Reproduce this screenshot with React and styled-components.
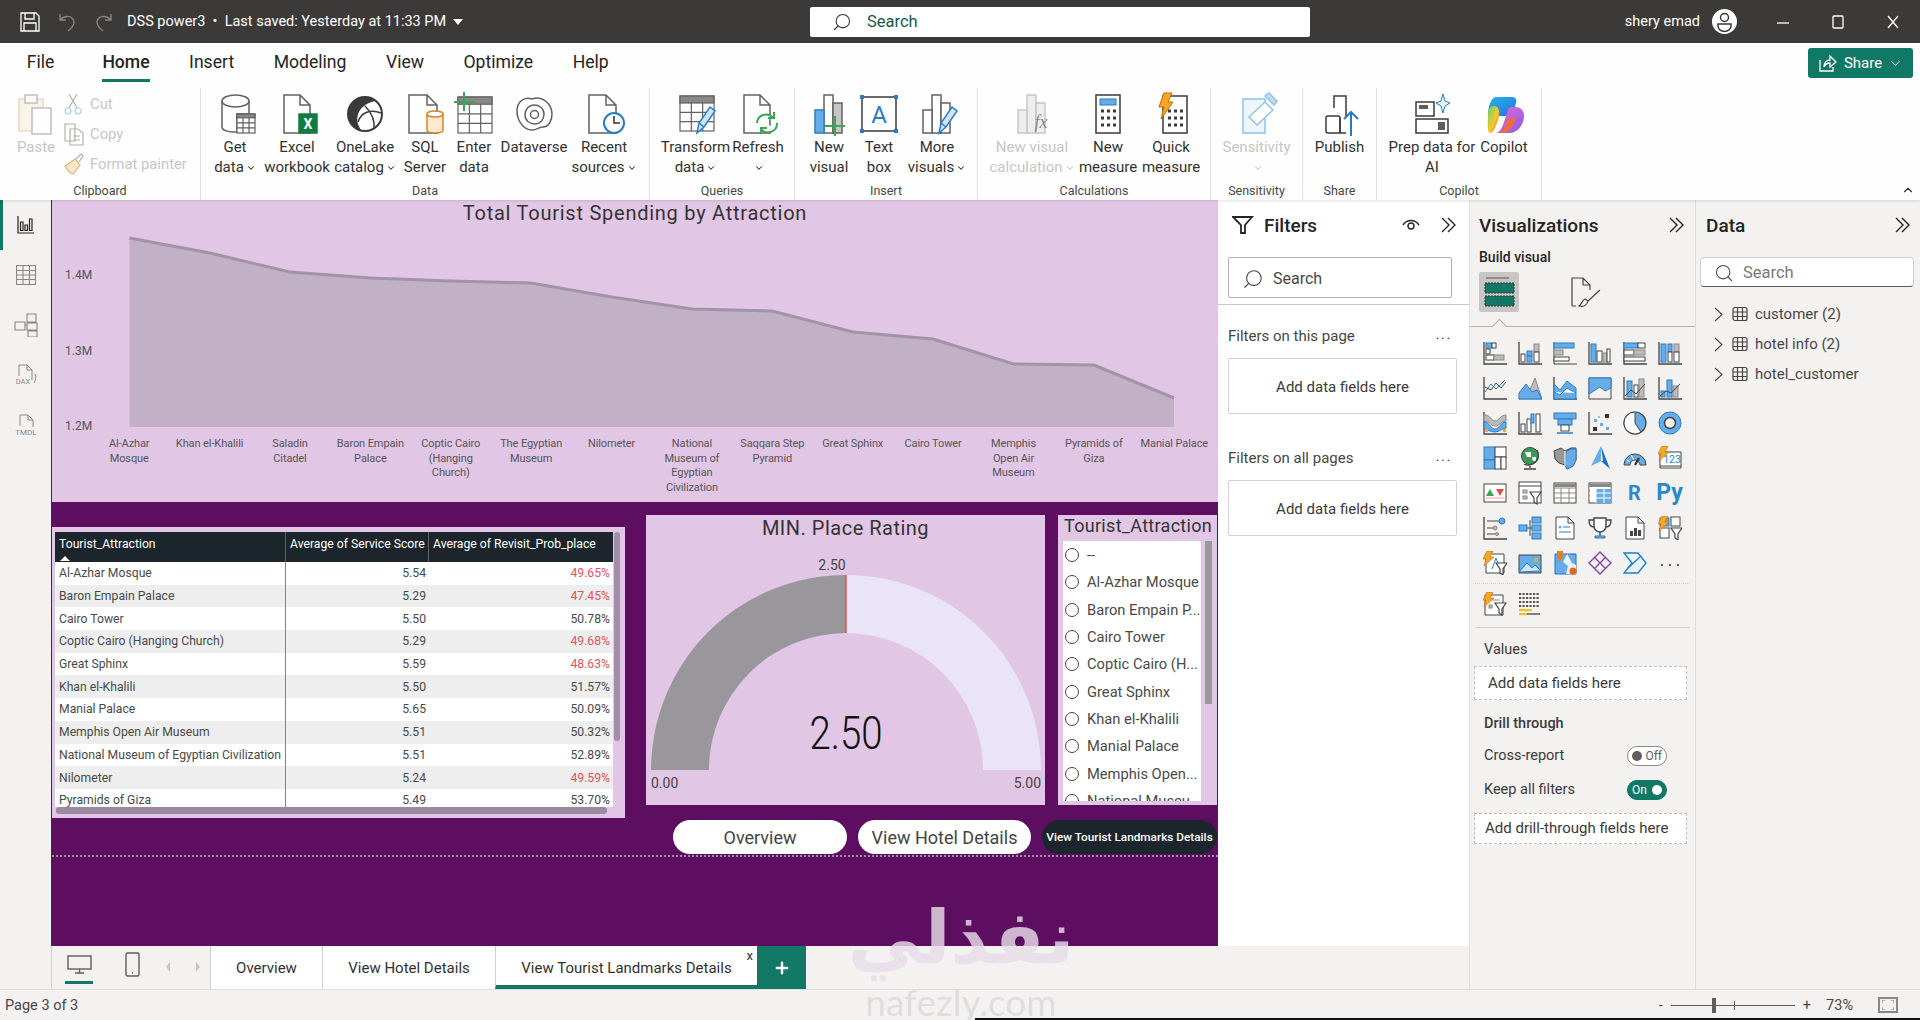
import React from "react";
import styled, { createGlobalStyle } from "styled-components";
import { Search, ChevronDown, ChevronUp, Plus } from "lucide-react";

const GlobalStyle = createGlobalStyle`
  html, body { margin: 0; padding: 0; overflow: hidden; background: #f3f2f1; }
  * { box-sizing: border-box; }
  body { font-family: Roboto, "Noto Sans", sans-serif; color: #323130; }
`;

const TEAL = "#117865";
const BLUE = "#66ade8";
const EDGE = "#2a7dc4";
const GREY = "#bcbcbc";

const Page = styled.div`
  position: relative;
  width: 1920px;
  height: 1020px;
  overflow: hidden;
  display: flex;
  flex-direction: column;
`;

/* title bar */
const TitleBar = styled.header`
  height: 43px;
  flex: none;
  background: #3b3a38;
  display: flex;
  align-items: center;
  color: #fff;
`;
const TitleLeft = styled.div`
  width: 810px;
  flex: none;
  display: flex;
  align-items: center;
  padding-left: 20px;
`;
const QuickIcon = styled.svg`
  margin-right: ${p => p.$gap}px;
  flex: none;
`;
const DocTitle = styled.span`
  font-size: 14.5px;
  white-space: nowrap;
  width: 326px;
`;
const Caret = styled.span`
  width: 0;
  height: 0;
  border-left: 5px solid transparent;
  border-right: 5px solid transparent;
  border-top: 6px solid #fff;
`;
const TopSearch = styled.div`
  width: 500px;
  height: 30px;
  background: #fff;
  border-radius: 2px;
  display: flex;
  align-items: center;
  padding-left: 22px;
  gap: 15px;
  color: #17584c;
  font-size: 16.5px;
`;
const MirrorSearch = styled(Search)`
  transform: scaleX(-1);
`;
const TitleRight = styled.div`
  flex: 1;
  display: flex;
  align-items: center;
  justify-content: flex-end;
`;
const UserName = styled.span`
  font-size: 14.5px;
  margin-right: 12px;
`;
const Avatar = styled.svg`
  margin-right: 18px;
`;
const WindowButton = styled.div`
  width: 55px;
  display: flex;
  justify-content: center;
`;

/* menu */
const MenuBar = styled.nav`
  height: 39px;
  flex: none;
  background: #fefefe;
  display: flex;
  justify-content: space-between;
  padding: 0 7px 0 7px;
`;
const MenuList = styled.div`
  display: flex;
`;
const MenuItem = styled.div`
  position: relative;
  padding: 9px 19.75px 0;
  font-size: 17.6px;
  font-weight: ${p => (p.$active ? 500 : 400)};
  color: #252423;
  &:first-child { margin-right: 8.5px; }
  &::after {
    content: "";
    display: ${p => (p.$active ? "block" : "none")};
    position: absolute;
    left: 19.75px;
    right: 19.75px;
    bottom: 0;
    height: 3px;
    background: ${TEAL};
  }
`;
const ShareButton = styled.div`
  margin-top: 5px;
  width: 105px;
  height: 30px;
  background: ${TEAL};
  border-radius: 3px;
  color: #fff;
  font-size: 15px;
  display: flex;
  align-items: center;
  justify-content: center;
  gap: 6px;
`;

/* ribbon */
const Ribbon = styled.section`
  position: relative;
  height: 118px;
  flex: none;
  background: #fefefe;
  display: flex;
  padding-top: 6px;
  box-shadow: 0 1px 3px rgba(0, 0, 0, 0.12);
  z-index: 2;
`;
const Group = styled.div`
  width: ${p => p.$w}px;
  flex: none;
  height: 112px;
  border-right: 1px solid #e1dfdd;
  display: flex;
  flex-direction: column;
`;
const GroupBody = styled.div`
  flex: 1;
  display: flex;
  padding-left: ${p => p.$pad || 0}px;
`;
const GroupLabel = styled.div`
  height: 18px;
  line-height: 18px;
  text-align: center;
  font-size: 12.5px;
  color: #484644;
`;
const RibbonBtn = styled.div`
  width: ${p => p.$w}px;
  flex: none;
  display: flex;
  flex-direction: column;
  align-items: center;
  text-align: center;
  font-size: 15px;
  line-height: 20px;
  color: ${p => (p.$off ? "#c8c6c4" : "#323130")};
  white-space: nowrap;
`;
const IconBand = styled.div`
  height: 49px;
  display: flex;
  align-items: flex-start;
  justify-content: center;
  padding-top: 4px;
  opacity: ${p => (p.$off ? 0.4 : 1)};
`;
const SmallColumn = styled.div`
  display: flex;
  flex-direction: column;
  padding-top: 1px;
`;
const SmallBtn = styled.div`
  height: 30px;
  display: flex;
  align-items: center;
  font-size: 14.8px;
  color: #c8c6c4;
`;
const SmallIcon = styled.span`
  width: 31px;
  padding-left: 5px;
  display: flex;
`;
const Chevron = styled(ChevronDown)`
  vertical-align: -1px;
  margin-left: 2px;
`;
const CollapseRibbon = styled.div`
  position: absolute;
  right: 5px;
  bottom: 3px;
  display: flex;
`;

/* main */
const Main = styled.div`
  flex: 1;
  display: flex;
  min-height: 0;
`;
const Rail = styled.aside`
  width: 51px;
  flex: none;
  background: #f3f2f1;
  display: flex;
  flex-direction: column;
  position: relative;
  &::before {
    content: "";
    position: absolute;
    left: 0;
    top: 0;
    width: 3px;
    height: 50px;
    background: ${TEAL};
  }
`;
const RailSlot = styled.div`
  height: 50px;
  flex: none;
  display: flex;
  align-items: center;
  justify-content: center;
`;
const Center = styled.div`
  width: 1418px;
  flex: none;
  display: flex;
  flex-direction: column;
`;
const CanvasRow = styled.div`
  height: 746px;
  flex: none;
  display: flex;
`;
const Canvas = styled.main`
  width: 1167px;
  flex: none;
  background: #5d0e61;
  border-left: 1px solid #3c2a40;
`;
const ChartCard = styled.div`
  height: 302px;
  background: #e2c6e6;
`;
const CardTitle = styled.div`
  text-align: center;
  font-size: 20px;
  letter-spacing: ${p => p.$ls}px;
  line-height: 26px;
  height: 26px;
  color: #333;
  white-space: nowrap;
`;
const ChartSvg = styled.svg`
  display: block;
`;
const AxisLabels = styled.div`
  display: grid;
  grid-template-columns: repeat(14, 80.4px);
  padding-left: 37px;
  margin-top: 5px;
  font-size: 11px;
  letter-spacing: -0.1px;
  line-height: 14.6px;
  color: #555;
  text-align: center;
`;
const Lower = styled.div`
  height: 355px;
  display: flex;
  border-bottom: 2px dotted #a78aab;
`;
const TableCard = styled.div`
  position: relative;
  width: 573px;
  height: 291px;
  margin-top: 25px;
  flex: none;
  background: #e2c6e6;
  padding: 5px 0 0 3px;
`;
const HeaderRow = styled.div`
  width: 558px;
  height: 30px;
  display: grid;
  grid-template-columns: 231px 143px 184px;
  background: #1c252b;
  color: #fff;
  font-size: 12.2px;
`;
const HeaderCell = styled.div`
  position: relative;
  padding: 5px 0 0 4px;
  border-right: 1px solid #5c6468;
  white-space: nowrap;
  &:last-child { border-right: none; }
`;
const SortMark = styled.span`
  position: absolute;
  left: 5px;
  bottom: 1px;
  width: 0;
  height: 0;
  border-left: 5px solid transparent;
  border-right: 5px solid transparent;
  border-bottom: 5px solid #fff;
`;
const TableBody = styled.div`
  width: 558px;
  height: 245px;
  overflow: hidden;
`;
const DataRow = styled.div`
  height: 22.7px;
  display: grid;
  grid-template-columns: 231px 143px 184px;
  align-items: center;
  background: ${p => (p.$odd ? "#eeeeee" : "#fff")};
  font-size: 12.2px;
  color: #4a4a4a;
`;
const NameCell = styled.div`
  height: 100%;
  padding-left: 4px;
  display: flex;
  align-items: center;
  border-right: 1px solid #e0557f;
  white-space: nowrap;
`;
const NumCell = styled.div`
  text-align: right;
  padding-right: 3px;
  color: ${p => (p.$low ? "#e2545c" : "inherit")};
`;
const VScroll = styled.div`
  position: absolute;
  left: 562px;
  top: 5px;
  width: 6px;
  height: 209px;
  border-radius: 3px;
  background: #a48faa;
`;
const HScroll = styled.div`
  position: absolute;
  left: 4px;
  top: 280px;
  width: 551px;
  height: 7px;
  border-radius: 3px;
  background: #9c8aa3;
`;
const RightSide = styled.div`
  margin-left: 21px;
  padding-top: 13px;
  flex: 1;
`;
const VisualRow = styled.div`
  display: flex;
  gap: 13px;
`;
const GaugeCard = styled.div`
  width: 399px;
  height: 290px;
  background: #e2c6e6;
`;
const SlicerCard = styled.div`
  width: 159px;
  height: 290px;
  background: #e2c6e6;
  position: relative;
`;
const SlicerTitle = styled.div`
  height: 26px;
  line-height: 22px;
  padding-left: 6px;
  font-size: 18px;
  letter-spacing: 0.3px;
  color: #333;
  white-space: nowrap;
`;
const SlicerList = styled.div`
  margin-left: 5px;
  width: 138px;
  height: 260px;
  padding-top: 0.5px;
  background: #fff;
  overflow: hidden;
`;
const SlicerItem = styled.div`
  height: 27.3px;
  display: flex;
  align-items: center;
  gap: 8px;
  padding-left: 2px;
  font-size: 14.7px;
  color: #4a4a4a;
  white-space: nowrap;
`;
const Radio = styled.span`
  width: 14px;
  height: 14px;
  border-radius: 50%;
  border: 1px solid #444;
  flex: none;
`;
const SlicerScroll = styled.div`
  position: absolute;
  left: 147px;
  top: 26px;
  width: 7px;
  height: 163px;
  background: #999;
`;
const NavRow = styled.div`
  display: flex;
  justify-content: flex-end;
  gap: 11px;
  margin-top: 15px;
  padding-right: 1px;
`;
const NavPill = styled.div`
  width: ${p => p.$w}px;
  height: 34px;
  border-radius: 17px;
  background: ${p => (p.$dark ? "#1c252b" : "#fff")};
  color: ${p => (p.$dark ? "#fff" : "#444")};
  font-size: ${p => (p.$dark ? 11.8 : 18)}px;
  font-weight: ${p => (p.$dark ? 500 : 400)};
  display: flex;
  align-items: center;
  justify-content: center;
  white-space: nowrap;
`;

/* filters pane */
const FiltersPane = styled.aside`
  width: 251px;
  flex: none;
  background: #fff;
`;
const PaneHeader = styled.div`
  height: 50px;
  display: flex;
  align-items: center;
  padding: 0 ${p => p.$right || 10}px 0 ${p => p.$left}px;
  font-size: 19px;
  font-weight: 500;
  color: #252423;
`;
const HeaderText = styled.span`
  flex: 1;
  margin-left: ${p => p.$ml || 0}px;
`;
const EyeIcon = styled.svg`
  margin-right: 20px;
`;
const FilterSearch = styled.div`
  margin: 7px 17px 0 10px;
  height: 41px;
  border: 1px solid #b3b0ad;
  border-radius: 2px;
  display: flex;
  align-items: center;
  padding: 2px 0 0 13px;
  gap: 9px;
  font-size: 16px;
  color: #484644;
`;
const PaneRule = styled.div`
  height: 1px;
  margin-top: 6px;
  background: #c8c6c4;
`;
const FilterHead = styled.div`
  margin: ${p => p.$top}px 17px 0 10px;
  height: 20px;
  display: flex;
  justify-content: space-between;
  font-size: 15px;
  color: #484644;
`;
const Dots = styled.span`
  letter-spacing: 1.5px;
  line-height: 14px;
  font-size: 15px;
`;
const DropBox = styled.div`
  margin: 11px 12px 0 10px;
  height: 56px;
  padding-top: 1px;
  border: 1px solid #d2d0ce;
  border-radius: 2px;
  display: flex;
  align-items: center;
  justify-content: center;
  font-size: 15px;
  color: #3b3a39;
`;

/* viz pane */
const SidePane = styled.aside`
  width: ${p => p.$w}px;
  flex: none;
  background: #f3f2f1;
  border-left: 1px solid #e1dfdd;
`;
const BuildLabel = styled.div`
  height: 18px;
  margin-top: -1px;
  padding-left: 9px;
  font-size: 14px;
  font-weight: 500;
  color: #252423;
`;
const TileRow = styled.div`
  position: relative;
  display: flex;
  height: 55px;
  margin-top: 5px;
  padding-left: 9px;
  gap: 46px;
  border-bottom: 1px solid #b3b0ad;
  &::after {
    content: "";
    position: absolute;
    left: 24px;
    bottom: -6px;
    width: 10px;
    height: 10px;
    background: #f3f2f1;
    border-left: 1px solid #b3b0ad;
    border-top: 1px solid #b3b0ad;
    transform: rotate(45deg);
  }
`;
const Tile = styled.div`
  width: 40px;
  height: 40px;
  display: flex;
  align-items: center;
  justify-content: center;
  background: ${p => (p.$on ? "#c8c6c4" : "transparent")};
  border-radius: 2px;
`;
const VizGrid = styled.div`
  display: grid;
  grid-template-columns: repeat(6, 35px);
  grid-auto-rows: 35px;
  margin-top: ${p => p.$top}px;
  padding-left: 7px;
`;
const VizCell = styled.div`
  display: flex;
  align-items: center;
  justify-content: center;
  font-weight: 700;
  color: #2b88c9;
`;
const ScriptLabel = styled.span`
  font-size: ${p => p.$size}px;
  line-height: 1;
`;
const DotRule = styled.div`
  margin: ${p => p.$top}px 5px 0;
  border-top: 1px ${p => (p.$solid ? "solid" : "dotted")} #d2d0ce;
`;
const WellLabel = styled.div`
  margin-top: ${p => p.$top}px;
  height: 18px;
  line-height: 18px;
  padding-left: 14px;
  font-size: 14.5px;
  font-weight: ${p => p.$bold || 400};
  color: #3b3a39;
`;
const WellBox = styled.div`
  margin: ${p => p.$top}px 8px 0 4px;
  height: ${p => p.$h}px;
  background: #fff;
  border: 1px dashed #c0bebc;
  display: flex;
  align-items: center;
  padding-left: ${p => p.$pad}px;
  font-size: 15px;
  color: #3b3a39;
  white-space: nowrap;
`;
const ToggleRow = styled.div`
  margin-top: ${p => p.$top}px;
  height: 20px;
  display: flex;
  align-items: center;
  justify-content: space-between;
  padding: 0 28px 0 14px;
  font-size: 14.5px;
  color: #3b3a39;
`;
const Toggle = styled.div`
  width: 40px;
  height: 20px;
  border-radius: 10px;
  border: 1px solid ${p => (p.$on ? TEAL : "#8a8886")};
  background: ${p => (p.$on ? TEAL : "#fff")};
  color: ${p => (p.$on ? "#fff" : "#605e5c")};
  display: flex;
  align-items: center;
  justify-content: space-between;
  padding: 0 4px;
  font-size: 12px;
`;
const Knob = styled.span`
  width: 10px;
  height: 10px;
  border-radius: 50%;
  background: ${p => (p.$on ? "#fff" : "#605e5c")};
`;

/* data pane */
const DataSearch = styled.div`
  margin: 7px 6px 0 4px;
  height: 30px;
  background: #fff;
  border: 1px solid #d2d0ce;
  border-bottom: 1px solid #605e5c;
  border-radius: 4px;
  display: flex;
  align-items: center;
  padding: 1px 0 0 13px;
  gap: 9px;
  font-size: 16.5px;
  color: #7a7876;
`;
const Tree = styled.div`
  margin-top: 12px;
`;
const TreeRow = styled.div`
  height: 30px;
  display: flex;
  align-items: center;
  padding-left: 18px;
  gap: 9px;
  font-size: 15px;
  color: #484644;
`;
const TableGlyphWrap = styled.svg`
  margin-right: -2px;
`;

/* tab bar, status bar */
const TabBar = styled.div`
  flex: 1;
  display: flex;
  background: #f3f2f1;
`;
const Devices = styled.div`
  width: 159px;
  flex: none;
  display: flex;
  align-items: flex-start;
  border-left: 1px solid #d2d0ce;
  padding-left: 13px;
`;
const DeviceBtn = styled.div`
  position: relative;
  width: ${p => p.$w}px;
  height: 43px;
  margin-left: ${p => p.$ml || 0}px;
  display: flex;
  justify-content: center;
  padding-top: ${p => p.$top}px;
  &::after {
    content: "";
    display: ${p => (p.$on ? "block" : "none")};
    position: absolute;
    left: 0;
    right: 0;
    top: 35px;
    height: 3px;
    background: ${TEAL};
  }
`;
const Tab = styled.div`
  position: relative;
  width: ${p => p.$w}px;
  flex: none;
  background: #fff;
  border-left: 1px solid #d2d0ce;
  border-bottom: ${p => (p.$on ? `4px solid ${TEAL}` : "none")};
  display: flex;
  align-items: center;
  justify-content: center;
  padding-top: ${p => (p.$on ? 4 : 0)}px;
  font-size: 15px;
  color: #323130;
  white-space: nowrap;
`;
const TabClose = styled.span`
  position: absolute;
  right: 4px;
  top: 2px;
  font-size: 13px;
`;
const AddTab = styled.div`
  width: 49px;
  flex: none;
  background: ${TEAL};
  display: flex;
  align-items: center;
  justify-content: center;
`;
const StatusBar = styled.footer`
  position: relative;
  height: 31px;
  flex: none;
  background: #f3f2f1;
  border-top: 1px solid #e1dfdd;
  display: flex;
  align-items: center;
  justify-content: space-between;
  padding: 0 22px 0 5px;
  font-size: 14.5px;
  color: #484644;
  &::after {
    content: "";
    position: absolute;
    left: 975px;
    right: 0;
    bottom: 0;
    height: 2px;
    background: #111;
  }
`;
const ZoomControls = styled.div`
  display: flex;
  align-items: center;
`;
const ZoomTrack = styled.div`
  position: relative;
  width: 124px;
  height: 1px;
  margin: 0 8px;
  background: #605e5c;
`;
const ZoomThumb = styled.span`
  position: absolute;
  left: 41px;
  top: -7px;
  width: 4px;
  height: 15px;
  background: #605e5c;
`;
const ZoomTick = styled.span`
  position: absolute;
  left: 63px;
  top: -4px;
  width: 1px;
  height: 9px;
  background: #605e5c;
`;
const ZoomText = styled.span`
  margin: 0 25px 0 15px;
`;
const FitButton = styled.div`
  width: 20px;
  height: 16px;
  border: 2px solid #8a8886;
  display: flex;
  align-items: center;
  justify-content: center;
`;
const Watermark = styled.div`
  position: absolute;
  left: 840px;
  top: 888px;
  width: 242px;
  text-align: center;
  color: rgba(230, 220, 230, 0.82);
  pointer-events: none;
  z-index: 5;
`;
const WatermarkAr = styled.div`
  font-family: "DejaVu Sans", sans-serif;
  font-weight: 700;
  font-size: 74px;
  line-height: 98px;
`;
const WatermarkEn = styled.div`
  font-family: Lato, sans-serif;
  font-size: 37px;
  line-height: 32px;
  color: rgba(214, 212, 214, 0.7);
`;

/* small shared drawings */
const DoubleChevron = () => (
  <svg width="17" height="16" viewBox="0 0 17 16" fill="none" stroke="#252423" strokeWidth="1.4">
    <path d="M2 1l7 7-7 7M8 1l7 7-7 7" />
  </svg>
);
const TreeChevron = () => (
  <svg width="9" height="15" viewBox="0 0 9 15" fill="none" stroke="#484644" strokeWidth="1.1">
    <path d="M1 1l7 6.5-7 6.5" />
  </svg>
);

/* ribbon drawings */
const Ico = ({ children, w = 44, h = 44, vb }) => (
  <svg width={w} height={h} viewBox={vb || `0 0 ${w} ${h}`} fill="none" stroke="#616161" strokeWidth="1.5">
    {children}
  </svg>
);
const Doc = ({ x = 8, w = 26 }) => (
  <path d={`M${x} 41V3H${x + w - 10}L${x + w} 13V41Z M${x + w - 10} 3V13H${x + w}`} fill="#fff" />
);
const MiniTable = ({ x, y, w, h, stroke = "#616161" }) => (
  <g stroke={stroke} strokeWidth="1.2" fill="#fff">
    <rect x={x} y={y} width={w} height={h} />
    <rect x={x} y={y} width={w} height={h / 5} fill="#8a8886" />
    <path d={`M${x} ${y + h * 0.47}H${x + w}M${x} ${y + h * 0.73}H${x + w}M${x + w / 3} ${y + h / 5}V${y + h}M${x + (2 * w) / 3} ${y + h / 5}V${y + h}`} />
  </g>
);
const Pencil = ({ dx = 0, dy = 0 }) => (
  <path transform={`translate(${dx} ${dy})`} d="M24 41l2-10L37 15l5 4L31 35z M26 31l5 4" fill="#cfe4f7" stroke="#2a7dc4" strokeWidth="1.5" />
);
const Bars = ({ fill = "#fff", stroke = "#616161" }) => (
  <g stroke={stroke} fill={fill}>
    <rect x="17" y="3" width="9" height="38" />
    <rect x="8" y="18" width="9" height="23" />
    <rect x="26" y="11" width="9" height="30" />
  </g>
);

const icons = {
  paste: (
    <Ico>
      <rect x="5" y="7" width="24" height="32" fill="#f6e7c8" stroke="#c9a66b" />
      <rect x="11" y="3" width="12" height="8" fill="#fff" />
      <rect x="18" y="16" width="19" height="26" fill="#fff" />
    </Ico>
  ),
  get: (
    <Ico>
      <path d="M9 9V35c0 3 5 5 12 5h3V22h12V9" fill="#fff" />
      <ellipse cx="22.5" cy="9" rx="13.5" ry="6" fill="#fff" />
      <MiniTable x={24} y={22} w={18} h={19} />
    </Ico>
  ),
  excel: (
    <Ico>
      <Doc x={9} w={26} />
      <rect x="24" y="22" width="18" height="19" fill="#107c41" stroke="#107c41" />
      <text x="33" y="37" fontSize="14" fontWeight="700" fill="#fff" stroke="none" textAnchor="middle">X</text>
    </Ico>
  ),
  lake: (
    <Ico>
      <circle cx="22" cy="22" r="17" fill="#fff" stroke="#3b3a39" strokeWidth="2" />
      <path d="M20 5C8 8 3 18 6 28c2 7 8 10 13 11C11 30 12 14 32 9c-3-3-8-4-12-4z" fill="#3b3a39" stroke="none" />
      <path d="M15 30C18 20 28 17 38 21M22 14c6 6 10 14 9 23" stroke="#3b3a39" strokeWidth="1.5" />
    </Ico>
  ),
  sql: (
    <Ico>
      <Doc x={6} w={28} />
      <path d="M24 22V38c0 2 4 3 8 3s8-1 8-3V22" fill="#fde9d0" stroke="#d9822b" />
      <ellipse cx="32" cy="22" rx="8" ry="3" fill="#fff" stroke="#d9822b" />
    </Ico>
  ),
  enter: (
    <Ico>
      <MiniTable x={6} y={5} w={34} h={36} />
      <path d="M12 0V19M2 10H22" stroke="#3aa655" strokeWidth="2" />
    </Ico>
  ),
  verse: (
    <Ico>
      <path d="M20 7c-8-3-15 3-15 12s6 19 15 19c5 0 7-3 11-3 6 0 9-7 9-13C40 12 30 3 20 7z" fill="#fff" />
      <path d="M22 13c-5 0-9 4-9 10s5 9 10 9 9-4 9-10-5-9-10-9z" />
      <circle cx="22.5" cy="22.5" r="4" />
    </Ico>
  ),
  recent: (
    <Ico>
      <Doc x={7} w={27} />
      <circle cx="32" cy="31" r="10" fill="#fff" stroke="#2a7dc4" strokeWidth="2" />
      <path d="M32 24V31H38" stroke="#333" />
    </Ico>
  ),
  transform: (
    <Ico>
      <MiniTable x={6} y={4} w={34} h={35} />
      <Pencil dx={-1} />
    </Ico>
  ),
  refresh: (
    <Ico>
      <Doc x={8} w={26} />
      <path d="M22 31a9 9 0 0 1 16-5M42 31a9 9 0 0 1-16 6" fill="#fff" stroke="#3aa655" strokeWidth="2" transform="translate(-1 0)" />
      <path d="M38 20v6h-6M25 42v-6h6" stroke="#3aa655" strokeWidth="2" />
    </Ico>
  ),
  newVisual: (
    <Ico>
      <rect x="17" y="3" width="9" height="38" fill="#fff" />
      <rect x="8" y="18" width="9" height="23" fill={BLUE} stroke={EDGE} />
      <rect x="26" y="11" width="9" height="30" fill="#c8c6c4" />
      <path d="M28 24V44M18 34H38" stroke="#3aa655" strokeWidth="2" />
    </Ico>
  ),
  textBox: (
    <Ico>
      <rect x="5" y="5" width="34" height="34" fill="#fff" stroke="#3b3a39" />
      <text x="22" y="31" fontSize="24" stroke="none" fill="#2a7dc4" textAnchor="middle">A</text>
      <g fill={EDGE} stroke="none">
        <rect x="3" y="3" width="4" height="4" />
        <rect x="37" y="3" width="4" height="4" />
        <rect x="3" y="37" width="4" height="4" />
        <rect x="37" y="37" width="4" height="4" />
      </g>
    </Ico>
  ),
  moreVisual: (
    <Ico>
      <Bars />
      <Pencil />
    </Ico>
  ),
  calc: (
    <Ico>
      <Bars fill="#eee" stroke="#c8c6c4" />
      <text x="31" y="36" fontSize="18" fontStyle="italic" fontFamily="Liberation Serif" fill="#888" stroke="none" textAnchor="middle">fx</text>
    </Ico>
  ),
  measure: (
    <Ico>
      <rect x="10" y="3" width="24" height="38" fill="#fff" stroke="#3b3a39" />
      <rect x="14" y="7" width="16" height="6" fill={BLUE} stroke={EDGE} strokeWidth="1" />
      <path d="M15 19h3M21 19h3M27 19h3M15 26h3M21 26h3M27 26h3M15 33h3M21 33h3M27 33h3" stroke="#3b3a39" strokeWidth="3" />
    </Ico>
  ),
  quick: (
    <Ico>
      <rect x="14" y="4" width="24" height="37" fill="#fff" stroke="#3b3a39" />
      <path d="M19 19h3M25 19h3M31 19h3M19 26h3M25 26h3M31 26h3M19 33h3M25 33h3M31 33h3" stroke="#3b3a39" strokeWidth="3" />
      <path d="M15 1h8l-4 9h5L12 27l3-12h-5z" fill="#f7a823" stroke="#c8650b" strokeWidth="1" />
    </Ico>
  ),
  sensitivity: (
    <Ico>
      <path d="M8 7H30V41H8Z" fill="#eef6fc" stroke="#8fc3e8" />
      <path d="M14 25L30 10l8 8-16 15z" fill="#fff" stroke="#8fc3e8" />
      <path d="M30 4l9 9 3-4-8-8z" fill="#bcdcf3" stroke="#8fc3e8" />
    </Ico>
  ),
  publish: (
    <Ico>
      <path d="M16 16V4h12v22" fill="#fff" stroke="#3b3a39" />
      <rect x="8" y="24" width="14" height="17" rx="2" fill="#fff" stroke="#3b3a39" />
      <path d="M22 26V41h6" stroke="#3b3a39" />
      <path d="M33 44V20M26 27l7-7 7 7" stroke="#2a7dc4" strokeWidth="2" />
    </Ico>
  ),
  prep: (
    <Ico>
      <path d="M6 10H24V24H6ZM6 27H38V41H6Z" fill="#fff" stroke="#3b3a39" />
      <rect x="9" y="13" width="9" height="4" fill="#605e5c" stroke="none" />
      <rect x="28" y="30" width="7" height="8" fill="#605e5c" stroke="none" />
      <path d="M33 2l2 7 5 2-5 3-2 7-2-7-5-3 5-2z" fill="#e8f3fc" stroke="#2a7dc4" strokeWidth="1" />
    </Ico>
  ),
  copilot: (
    <svg width="44" height="44" viewBox="0 0 44 44">
      <defs>
        <linearGradient id="copA" x1="0" y1="0" x2="1" y2="1">
          <stop offset="0" stopColor="#1fb6e8" />
          <stop offset="1" stopColor="#2f6fe0" />
        </linearGradient>
        <linearGradient id="copB" x1="0" y1="0" x2="1" y2="1">
          <stop offset="0" stopColor="#e86bd0" />
          <stop offset="1" stopColor="#8a5ce6" />
        </linearGradient>
        <linearGradient id="copC" x1="0" y1="0" x2="1" y2="1">
          <stop offset="0" stopColor="#5fd36a" />
          <stop offset="0.55" stopColor="#f7c92b" />
          <stop offset="1" stopColor="#f0583a" />
        </linearGradient>
      </defs>
      <path d="M14 5h16c4 0 5 3 4 6L30 24H6c0-9 3-19 8-19z" fill="url(#copA)" />
      <path d="M6 22c0-5 3-8 6-8 6 0 6 8 4 14-2 5-4 13-8 13-3 0-2-12-2-19z" fill="url(#copC)" />
      <path d="M30 15h4c5 0 8 4 8 9 0 9-7 17-14 17H14c4-1 6-5 8-11l4-12c1-2 2-3 4-3z" fill="url(#copB)" />
      <path d="M14 41c5 0 8-3 10-9l2-6h8c-2 8-7 15-14 15z" fill="#f36a3d" />
    </svg>
  ),
};

const ribbonGroups = [
  {
    label: "Data", w: 449, pad: 3,
    items: [
      { w: 62, icon: "get", lines: ["Get", "data"], more: true },
      { w: 62, icon: "excel", lines: ["Excel", "workbook"] },
      { w: 74, icon: "lake", lines: ["OneLake", "catalog"], more: true },
      { w: 46, icon: "sql", lines: ["SQL", "Server"] },
      { w: 52, icon: "enter", lines: ["Enter", "data"] },
      { w: 68, icon: "verse", lines: ["Dataverse"] },
      { w: 72, icon: "recent", lines: ["Recent", "sources"], more: true },
    ],
  },
  {
    label: "Queries", w: 145, pad: 8,
    items: [
      { w: 75, icon: "transform", lines: ["Transform", "data"], more: true },
      { w: 50, icon: "refresh", lines: ["Refresh"], moreLine: true },
    ],
  },
  {
    label: "Insert", w: 183, pad: 10,
    items: [
      { w: 48, icon: "newVisual", lines: ["New", "visual"] },
      { w: 52, icon: "textBox", lines: ["Text", "box"] },
      { w: 64, icon: "moreVisual", lines: ["More", "visuals"], more: true },
    ],
  },
  {
    label: "Calculations", w: 233, pad: 12,
    items: [
      { w: 84, icon: "calc", lines: ["New visual", "calculation"], more: true, off: true },
      { w: 68, icon: "measure", lines: ["New", "measure"] },
      { w: 58, icon: "quick", lines: ["Quick", "measure"] },
    ],
  },
  {
    label: "Sensitivity", w: 92, pad: 0,
    items: [{ w: 91, icon: "sensitivity", lines: ["Sensitivity"], moreLine: true, off: true }],
  },
  { label: "Share", w: 74, pad: 0, items: [{ w: 73, icon: "publish", lines: ["Publish"] }] },
  {
    label: "Copilot", w: 165, pad: 10,
    items: [
      { w: 90, icon: "prep", lines: ["Prep data for", "AI"] },
      { w: 54, icon: "copilot", lines: ["Copilot"] },
    ],
  },
];

/* viz pane drawings */
const R = ({ x, y, w, h, f = BLUE, s = EDGE }) => <rect x={x} y={y} width={w} height={h} fill={f} stroke={s} strokeWidth="1" />;
const Axes = () => <path d="M1 1V23H24" stroke="#444" strokeWidth="1.3" fill="none" />;
const Bolt = () => <path d="M4 0h6L7 6h4L1 15l2-7H0z" fill="#f7a823" stroke="#c8650b" strokeWidth=".6" />;
const Funnel = ({ dx = 0, dy = 0 }) => <path transform={`translate(${dx} ${dy})`} d="M0 0H11L7 6V12L4 10V6Z" fill="#fff" stroke="#444" strokeWidth="1.2" />;
const V = ({ children }) => (
  <svg width="24" height="24" viewBox="0 0 24 24" fill="none" stroke="#444" strokeWidth="1">
    {children}
  </svg>
);
const G1 = { f: "#bcbcbc", s: "#8a8886" };
const W1 = { f: "#fff", s: "#444" };

const vizIcons = [
  <V><Axes /><R x={3} y={2} w={6} h={5} /><R x={9} y={2} w={4} h={5} {...W1} /><R x={3} y={8} w={4} h={5} {...W1} /><R x={3} y={14} w={8} h={5} {...W1} /><R x={11} y={14} w={10} h={5} {...G1} /></V>,
  <V><Axes /><R x={3} y={13} w={4} h={8} {...W1} /><R x={9} y={10} w={5} h={5} /><R x={9} y={15} w={5} h={6} /><R x={16} y={3} w={5} h={8} {...G1} /><R x={16} y={11} w={5} h={10} {...W1} /></V>,
  <V><path d="M1 1V23H24" stroke="#444" /><R x={1} y={2} w={20} h={5} /><R x={1} y={9} w={9} h={5} {...G1} /><R x={1} y={16} w={15} h={4} {...W1} /></V>,
  <V><Axes /><R x={3} y={3} w={5} h={18} /><R x={9} y={10} w={5} h={11} {...W1} /><R x={15} y={12} w={4} h={9} {...G1} /><R x={19} y={8} w={3} h={13} {...W1} /></V>,
  <V><Axes /><R x={1} y={2} w={14} h={5} /><R x={15} y={2} w={7} h={5} {...W1} /><R x={1} y={9} w={10} h={5} {...W1} /><R x={11} y={9} w={11} h={5} {...G1} /><R x={1} y={16} w={21} h={4} {...W1} /></V>,
  <V><Axes /><R x={3} y={3} w={5} h={18} /><R x={10} y={3} w={4} h={8} /><R x={10} y={11} w={4} h={10} {...W1} /><R x={16} y={3} w={5} h={8} {...G1} /><R x={16} y={11} w={5} h={10} {...W1} /></V>,

  <V><Axes /><path d="M2 16L8 8l5 5 9-9" stroke={EDGE} /><path d="M2 11l6 3 5-7 5 5 5-6" stroke="#444" /></V>,
  <V><path d="M1 23L6 13l5 3 6-14 7 21z" fill={GREY} stroke="#8a8886" /><path d="M1 23V17L8 8l6 8 5-2 5 9z" fill={BLUE} stroke={EDGE} /></V>,
  <V><Axes /><path d="M1 8l6 6 7-9 9 7v11H1z" fill={BLUE} stroke={EDGE} /><path d="M1 16l6 3 7-7 9 5" stroke={EDGE} fill="#fff" /></V>,
  <V><path d="M1 2H23V23H1z" stroke="#444" /><path d="M1 2H23V12l-6 3-5-4-11 7z" fill={BLUE} stroke={EDGE} /></V>,
  <V><Axes /><R x={4} y={5} w={5} h={16} /><R x={11} y={9} w={4} h={12} {...W1} /><R x={16} y={3} w={5} h={18} {...G1} /><path d="M2 20l6-6 5 4 9-10" stroke="#444" /></V>,
  <V><Axes /><R x={3} y={15} w={4} h={6} /><R x={9} y={4} w={5} h={17} /><R x={15} y={10} w={5} h={11} {...G1} /><path d="M2 20l6-5 5 2 9-9" stroke="#444" /></V>,

  <V><Axes /><path d="M1 4c7 0 7 6 11 6s5-6 11-6v6c-6 0-6 5-11 5S8 10 1 10z" fill={GREY} stroke="#8a8886" /><path d="M1 11c6 0 6 7 11 7s5-7 11-7v6c-4 0-6 4-11 4S4 18 1 18z" fill={BLUE} stroke={EDGE} /><path d="M2 18h3v3H2zM20 18h3v3h-3z" fill="#f7a823" stroke="none" /></V>,
  <V><Axes /><R x={3} y={13} w={4} h={8} {...W1} /><R x={9} y={8} w={4} h={13} {...W1} /><R x={13} y={3} w={3} h={9} /><R x={18} y={3} w={4} h={18} {...W1} /></V>,
  <V><R x={1} y={2} w={22} h={6} /><R x={5} y={8} w={14} h={6} /><R x={8} y={14} w={8} h={6} {...W1} /><path d="M4 22H20" stroke={EDGE} strokeWidth="1.5" /></V>,
  <V><Axes /><path d="M6 8h3v3H6zM12 12h3v3h-3zM18 16h3v3h-3z" fill={BLUE} stroke="none" /><path d="M17 3h4v4h-4zM5 16h4v4H5z" fill="#333" stroke="none" /><path d="M10 5h2v2h-2z" fill={GREY} stroke="none" /></V>,
  <V><circle cx="12" cy="12" r="11" fill={BLUE} stroke="#444" strokeWidth="1.2" /><path d="M12 12V1A11 11 0 0 0 1 12a11 11 0 0 0 17 9z" fill="#fff" stroke="#444" strokeWidth="1" /></V>,
  <V><circle cx="12" cy="12" r="11" fill={BLUE} stroke={EDGE} strokeWidth="1" /><circle cx="12" cy="12" r="5.5" fill="#f3f2f1" stroke="#444" strokeWidth="1.5" /></V>,

  <V><R x={1} y={1} w={11} h={13} /><R x={1} y={14} w={11} h={9} /><R x={12} y={1} w={11} h={10} {...W1} /><R x={12} y={11} w={6} h={12} {...W1} /><R x={18} y={11} w={5} h={12} {...W1} /></V>,
  <V><circle cx="12" cy="10" r="8.5" fill="#3b9a57" stroke="#444" /><path d="M7 6h6v5H9zM14 11h4v4h-3z" fill="#fff" stroke="none" /><path d="M19 4a10 10 0 0 1-13 14M12 20v2M6 23H18" stroke="#444" strokeWidth="1.3" /></V>,
  <V><path d="M1 5l7-3 4 3 6-3h5v12l-3 6-6 3-2-4-6-2-4-4z" fill="#9a9896" stroke="#444" /><path d="M13 6l5-3h5v11l-3 6-6 3-2-4z" fill={BLUE} stroke={EDGE} /><path d="M12 5v15" stroke="#fff" /></V>,
  <V><path d="M13 0L3 20l10-5z" fill={BLUE} stroke="none" /><path d="M13 0l2 15-2 0 9 8z" fill="#1f6fc0" stroke="none" /></V>,
  <V><path d="M1 19A11 11 0 0 1 23 19H17A5 5 0 0 0 7 19Z" fill={BLUE} stroke="#444" /><path d="M12 19l4-7" stroke="#333" strokeWidth="2.2" /><path d="M8 9l3 5M4 14l3 2" stroke="#fff" /></V>,
  <V><path d="M2 6H23V22H2z" fill="#fff" stroke="#444" /><path d="M2 20H23" stroke="#444" /><text x="14" y="17" fontSize="10.5" fill="#2b88c9" stroke="none" textAnchor="middle" fontWeight="400">123</text><Bolt /></V>,

  <V><R x={1} y={3} w={22} h={18} {...W1} /><path d="M3 17H21" stroke="#e9a" /><path d="M6 9l4 7H2z" fill="#3aa655" stroke="none" transform="translate(1 -1)" /><path d="M13 8h8l-4 7z" fill="#d9534f" stroke="none" /></V>,
  <V><R x={1} y={1} w={22} h={21} {...W1} /><path d="M1 5H23" stroke="#444" /><R x={5} y={9} w={4} h={3} {...G1} /><R x={5} y={15} w={4} h={3} {...G1} /><Funnel dx={12} dy={11} /></V>,
  <V><R x={1} y={2} w={22} h={20} {...W1} /><path d="M1 7H23M1 12H23M1 17H23M8 7V22M16 7V22" stroke="#8a8886" /><path d="M1 4.5H23" stroke="#8a8886" strokeWidth="3" /></V>,
  <V><R x={1} y={2} w={22} h={20} {...W1} /><rect x="8" y="8" width="15" height="14" fill={BLUE} stroke="none" /><path d="M1 7H23M1 12H23M1 17H23M8 7V22M16 7V22" stroke="#fff" /><path d="M1 4.5H23" stroke="#8a8886" strokeWidth="3" /></V>,
  <ScriptLabel $size={20}>R</ScriptLabel>,
  <ScriptLabel $size={23}>Py</ScriptLabel>,

  <V><Axes /><path d="M4 5H17M4 12h6M4 18h9" stroke="#444" /><circle cx="19" cy="5" r="3" fill={BLUE} stroke={EDGE} /><circle cx="12" cy="12" r="2" fill={GREY} stroke="#8a8886" /><circle cx="14" cy="18" r="1.5" fill={GREY} stroke="#8a8886" /></V>,
  <V><R x={1} y={9} w={8} h={6} /><R x={14} y={1} w={9} h={6} /><R x={14} y={9} w={9} h={6} /><R x={14} y={17} w={9} h={6} /><path d="M9 12h5M12 4v16" stroke="#444" /></V>,
  <V><path d="M3 1H15L21 7V23H3z" fill="#fff" stroke="#444" /><path d="M15 1V7H21" stroke="#444" /><circle cx="7" cy="11" r="1.5" fill={BLUE} stroke="none" /><path d="M10 11H17M6 16H18" stroke={EDGE} /></V>,
  <V><path d="M6 2H18V10A6 6 0 0 1 6 10Z" fill="#fff" stroke="#444" strokeWidth="1.4" /><path d="M6 4H1C1 9 3 11 6 11M18 4H23C23 9 21 11 18 11M12 16V20" stroke="#444" strokeWidth="1.4" /><path d="M7 22H17V20H7z" fill={BLUE} stroke={EDGE} /></V>,
  <V><path d="M3 1H15L21 7V23H3z" fill="#fff" stroke="#444" /><path d="M15 1V7H21" stroke="#444" /><path d="M7 15h3v5H7zM11 12h3v8h-3zM15 14h3v6h-3z" fill="#444" stroke="none" /></V>,
  <V><R x={2} y={12} w={9} h={10} {...W1} /><R x={13} y={1} w={9} h={9} {...W1} /><R x={2} y={2} w={9} h={8} /><Funnel dx={13} dy={12} /><Bolt /></V>,

  <V><path d="M3 3H21V22H3z" fill="#fff" stroke="#444" /><path d="M9 18l4-11 3 8" stroke={EDGE} /><Funnel dx={13} dy={12} /><Bolt /></V>,
  <V><path d="M1 4H23V22H1z" fill={BLUE} stroke="#444" /><path d="M1 21l8-9 5 5 3-3 6 6z" fill="#cfe4f7" stroke={EDGE} /><circle cx="18" cy="9" r="2" fill="#f7a823" stroke="none" /></V>,
  <V><path d="M2 3H23V23H2z" fill={BLUE} stroke="#1f6fc0" /><path d="M14 3l-4 8 5 4-2 8h10V14l-4-2z" fill="#e8f3fc" stroke="none" /><path d="M4 0h6v6L7 11 4 6z" fill="#d9822b" stroke="none" /><circle cx="20" cy="20" r="3.5" fill="#e8660c" stroke="none" /></V>,
  <V><path d="M12 1L23 12 12 23 1 12Z" stroke="#8a3fb3" strokeWidth="1.4" /><path d="M6.5 6.5L17.5 17.5M17.5 6.5L6.5 17.5" stroke="#8a3fb3" strokeWidth="1.4" /></V>,
  <V><path d="M1 2H15L23 12 15 22H1L9 12Z" fill="#e8f3fc" stroke="#1f7fd0" strokeWidth="1.4" /><path d="M5 17L17 6" stroke="#1f7fd0" strokeWidth="1.4" /></V>,
  <ScriptLabel $size={17}><svg width="20" height="6" viewBox="0 0 20 6"><g fill="#444"><circle cx="2" cy="3" r="1.1" /><circle cx="10" cy="3" r="1.1" /><circle cx="18" cy="3" r="1.1" /></g></svg></ScriptLabel>,
];

const extraViz = [
  <V><path d="M2 3H20V23H2z" fill="#fff" stroke="#444" /><path d="M9 8H17" stroke="#8a8886" /><R x={6} y={13} w={3} h={3} {...G1} /><Funnel dx={12} dy={11} /><Bolt /></V>,
  <V><g fill="#555" stroke="none">{[1, 5, 9, 13].map(y => [1, 4.5, 8, 11.5, 15, 18.5].map(x => <rect key={`${x}-${y}`} x={x} y={y} width="2.2" height="2" />))}</g><g fill="#e8c32a" stroke="none"><rect x="1" y="17" width="13" height="2.2" /><rect x="1" y="21" width="8" height="2.2" /></g><path d="M9 22H22" stroke="#333" strokeWidth="1.2" /></V>,
];

const TableGlyph = () => (
  <TableGlyphWrap width="16" height="16" viewBox="0 0 16 16" fill="none" stroke="#484644" strokeWidth="1.2">
    <rect x="1" y="1.5" width="14" height="13" rx="2" />
    <path d="M1 6H15M1 10.5H15M5.5 1.5V14.5M10.5 1.5V14.5" />
  </TableGlyphWrap>
);

/* data */
const spending = [[129.5, 238], [210, 253], [290, 272], [370.7, 278], [451, 281], [531, 283], [611.6, 297], [692, 309], [772, 311], [853, 332], [933, 339], [1013.5, 364], [1094, 365], [1174, 398]];
const chartLine = spending.map(([x, y]) => `${x - 52},${y - 226}`).join(" ");

const axisNames = [
  ["Al-Azhar", "Mosque"], ["Khan el-Khalili"], ["Saladin", "Citadel"], ["Baron Empain", "Palace"],
  ["Coptic Cairo", "(Hanging", "Church)"], ["The Egyptian", "Museum"], ["Nilometer"],
  ["National", "Museum of", "Egyptian", "Civilization"], ["Saqqara Step", "Pyramid"], ["Great Sphinx"],
  ["Cairo Tower"], ["Memphis", "Open Air", "Museum"], ["Pyramids of", "Giza"], ["Manial Palace"],
];

const rows = [
  ["Al-Azhar Mosque", "5.54", "49.65%", true],
  ["Baron Empain Palace", "5.29", "47.45%", true],
  ["Cairo Tower", "5.50", "50.78%"],
  ["Coptic Cairo (Hanging Church)", "5.29", "49.68%", true],
  ["Great Sphinx", "5.59", "48.63%", true],
  ["Khan el-Khalili", "5.50", "51.57%"],
  ["Manial Palace", "5.65", "50.09%"],
  ["Memphis Open Air Museum", "5.51", "50.32%"],
  ["National Museum of Egyptian Civilization", "5.51", "52.89%"],
  ["Nilometer", "5.24", "49.59%", true],
  ["Pyramids of Giza", "5.49", "53.70%"],
];

const slicerItems = ["--", "Al-Azhar Mosque", "Baron Empain P...", "Cairo Tower", "Coptic Cairo (H...", "Great Sphinx", "Khan el-Khalili", "Manial Palace", "Memphis Open...", "National Museu"];

const RibbonGroup = ({ group }) => (
  <Group $w={group.w}>
    <GroupBody $pad={group.pad}>
      {group.items.map(item => (
        <RibbonBtn key={item.icon} $w={item.w} $off={item.off}>
          <IconBand>{icons[item.icon]}</IconBand>
          {item.lines.map((line, i) => (
            <div key={line}>
              {line}
              {item.more && i === item.lines.length - 1 && <Chevron size={10} strokeWidth={2.5} />}
            </div>
          ))}
          {item.moreLine && <div><Chevron size={10} strokeWidth={2.5} /></div>}
        </RibbonBtn>
      ))}
    </GroupBody>
    <GroupLabel>{group.label}</GroupLabel>
  </Group>
);

export default function App() {
  return (
    <Page>
      <GlobalStyle />
      <TitleBar>
        <TitleLeft>
          <QuickIcon $gap={18} width="20" height="20" viewBox="0 0 20 20" fill="none" stroke="#fff" strokeWidth="1.3">
            <path d="M1 1H16L19 4V19H1Z M5 1V7H14V1 M4 19V11H16V19" />
          </QuickIcon>
          <QuickIcon $gap={19} width="18" height="20" viewBox="0 0 18 20" fill="none" stroke="#8a8886" strokeWidth="1.3">
            <path d="M2 2V8H8 M2 8C5 4 12 3 15 7c3 5-1 9-5 12" />
          </QuickIcon>
          <QuickIcon $gap={14} width="18" height="20" viewBox="0 0 18 20" fill="none" stroke="#8a8886" strokeWidth="1.3">
            <path d="M16 2V8H10 M16 8C13 4 6 3 3 7c-3 5 1 9 5 12" />
          </QuickIcon>
          <DocTitle>DSS power3 &nbsp;•&nbsp; Last saved: Yesterday at 11:33 PM</DocTitle>
          <Caret />
        </TitleLeft>
        <TopSearch>
          <MirrorSearch size={20} strokeWidth={1.3} color="#323130" />
          Search
        </TopSearch>
        <TitleRight>
          <UserName>shery emad</UserName>
          <Avatar width="25" height="25" viewBox="0 0 25 25">
            <circle cx="12.5" cy="12.5" r="12.5" fill="#fff" />
            <circle cx="12.5" cy="8.5" r="4" fill="none" stroke="#3b3a38" strokeWidth="1.5" />
            <path d="M6 15H19V17a6 5 0 0 1-13 0Z" fill="none" stroke="#3b3a38" strokeWidth="1.5" />
          </Avatar>
          <WindowButton>
            <svg width="14" height="14" stroke="#fff" strokeWidth="1.3"><path d="M1 8H13" /></svg>
          </WindowButton>
          <WindowButton>
            <svg width="14" height="14" fill="none" stroke="#fff" strokeWidth="1.3"><rect x="2" y="1" width="10" height="12" rx="1" /></svg>
          </WindowButton>
          <WindowButton>
            <svg width="14" height="14" stroke="#fff" strokeWidth="1.3"><path d="M2 1L12 13M12 1L2 13" /></svg>
          </WindowButton>
        </TitleRight>
      </TitleBar>

      <MenuBar>
        <MenuList>
          <MenuItem>File</MenuItem>
          <MenuItem $active>Home</MenuItem>
          <MenuItem>Insert</MenuItem>
          <MenuItem>Modeling</MenuItem>
          <MenuItem>View</MenuItem>
          <MenuItem>Optimize</MenuItem>
          <MenuItem>Help</MenuItem>
        </MenuList>
        <ShareButton>
          <svg width="20" height="20" viewBox="0 0 20 20" fill="none" stroke="#fff" strokeWidth="1.3">
            <path d="M2 7V18H15V14 M6 14C6 9 9 7 12 7V3L18 9l-6 5v-4c-3 0-5 1-6 4Z" />
          </svg>
          Share
          <ChevronDown size={15} strokeWidth={1.6} />
        </ShareButton>
      </MenuBar>

      <Ribbon>
        <Group $w={201}>
          <GroupBody $pad={13}>
            <RibbonBtn $w={46} $off>
              <IconBand $off>{icons.paste}</IconBand>
              Paste
            </RibbonBtn>
            <SmallColumn>
              <SmallBtn>
                <SmallIcon>
                  <svg width="20" height="22" viewBox="0 0 20 22" fill="none" stroke="#b3b0ad" strokeWidth="1.2">
                    <path d="M5 1L13 15M13 1L5 15" />
                    <circle cx="4" cy="18" r="3" stroke="#a9cdea" />
                    <circle cx="14" cy="18" r="3" stroke="#a9cdea" />
                  </svg>
                </SmallIcon>
                Cut
              </SmallBtn>
              <SmallBtn>
                <SmallIcon>
                  <svg width="20" height="24" viewBox="0 0 20 24" fill="none" stroke="#b3b0ad" strokeWidth="1.2">
                    <path d="M1 2H11V19H1Z M6 7H14L19 11V23H6Z" fill="#fff" />
                    <path d="M9 14H16M9 18H16" />
                  </svg>
                </SmallIcon>
                Copy
              </SmallBtn>
              <SmallBtn>
                <SmallIcon>
                  <svg width="20" height="22" viewBox="0 0 20 22" fill="none" stroke="#d9b77e" strokeWidth="1.2">
                    <path d="M1 13L11 6l5 6-7 9c-3-1-6-4-8-8z" fill="#f6e7c8" />
                    <path d="M12 6l5-5 2 2-4 6" stroke="#b3b0ad" />
                  </svg>
                </SmallIcon>
                Format painter
              </SmallBtn>
            </SmallColumn>
          </GroupBody>
          <GroupLabel>Clipboard</GroupLabel>
        </Group>
        {ribbonGroups.map(group => (
          <RibbonGroup key={group.label} group={group} />
        ))}
        <CollapseRibbon><ChevronUp size={14} strokeWidth={2} color="#323130" /></CollapseRibbon>
      </Ribbon>

      <Main>
        <Rail>
          <RailSlot>
            <svg width="17" height="18" viewBox="0 0 17 18" fill="none" stroke="#252423" strokeWidth="1.2">
              <path d="M1 0V17H17 M3.5 6H6V14.5H3.5Z M8 9H10.5V14.5H8Z M12.5 3H15V14.5H12.5Z" />
            </svg>
          </RailSlot>
          <RailSlot>
            <svg width="20" height="20" viewBox="0 0 20 20" fill="none" stroke="#8a8886" strokeWidth="1.1">
              <rect x="0.5" y="0.5" width="19" height="19" />
              <path d="M0.5 5.5H19.5M0.5 10H19.5M0.5 14.5H19.5M7 0.5V19.5M13.5 0.5V19.5" />
            </svg>
          </RailSlot>
          <RailSlot>
            <svg width="24" height="24" viewBox="0 0 24 24" fill="none" stroke="#8a8886" strokeWidth="1.1">
              <path d="M13 1H22V9H13Z M1 9H11V17H1Z M13 10H23V17H13Z M14 18H23V24H14Z M11 12H13 M13 9V10" />
            </svg>
          </RailSlot>
          <RailSlot>
            <svg width="24" height="22" viewBox="0 0 24 22" fill="none" stroke="#8a8886" strokeWidth="1">
              <path d="M5 12V1H13L18 6V16M13 1V6H18" />
              <text x="9" y="20" fontSize="7.5" fill="#8a8886" stroke="none" textAnchor="middle">DAX</text>
              <path d="M21 10c1 3 1 6-1 9" />
            </svg>
          </RailSlot>
          <RailSlot>
            <svg width="26" height="22" viewBox="0 0 26 22" fill="none" stroke="#8a8886" strokeWidth="1">
              <path d="M7 12V1H15L20 6V13M15 1V6H20" />
              <text x="13" y="21" fontSize="8" fill="#8a8886" stroke="none" textAnchor="middle">TMDL</text>
            </svg>
          </RailSlot>
        </Rail>

        <Center>
          <CanvasRow>
            <Canvas>
              <ChartCard>
                <CardTitle $ls={0.75}>Total Tourist Spending by Attraction</CardTitle>
                <ChartSvg width="1166" height="206" viewBox="0 0 1166 206">
                  <polygon points={`${chartLine} ${1174 - 52},201 ${129.5 - 52},201`} fill="#c1b0c6" />
                  <polyline points={chartLine} fill="none" stroke="#a094a6" strokeWidth="3" />
                  <g fontSize="12" fill="#555">
                    <text x="13" y="53">1.4M</text>
                    <text x="13" y="129">1.3M</text>
                    <text x="13" y="204">1.2M</text>
                  </g>
                </ChartSvg>
                <AxisLabels>
                  {axisNames.map(lines => (
                    <div key={lines[0]}>
                      {lines.map(line => <div key={line}>{line}</div>)}
                    </div>
                  ))}
                </AxisLabels>
              </ChartCard>

              <Lower>
                <TableCard>
                  <HeaderRow>
                    <HeaderCell>Tourist_Attraction<SortMark /></HeaderCell>
                    <HeaderCell>Average of Service Score</HeaderCell>
                    <HeaderCell>Average of Revisit_Prob_place</HeaderCell>
                  </HeaderRow>
                  <TableBody>
                    {rows.map(([name, score, prob, low], i) => (
                      <DataRow key={name} $odd={i % 2 === 1}>
                        <NameCell>{name}</NameCell>
                        <NumCell>{score}</NumCell>
                        <NumCell $low={low}>{prob}</NumCell>
                      </DataRow>
                    ))}
                  </TableBody>
                  <VScroll />
                  <HScroll />
                </TableCard>

                <RightSide>
                  <VisualRow>
                    <GaugeCard>
                      <CardTitle $ls={0.5}>MIN. Place Rating</CardTitle>
                      <ChartSvg width="399" height="264" viewBox="0 0 399 264">
                        <path d="M5 229A195 195 0 0 1 200 34V92A137 137 0 0 0 63 229Z" fill="#99979c" />
                        <path d="M200 34A195 195 0 0 1 395 229H337A137 137 0 0 0 200 92Z" fill="#e9e4f8" />
                        <path d="M200 34V92" stroke="#d9534f" strokeWidth="1.5" />
                        <g fontSize="14" fill="#444">
                          <text x="186" y="29" textAnchor="middle">2.50</text>
                          <text x="5" y="247">0.00</text>
                          <text x="395" y="247" textAnchor="end">5.00</text>
                        </g>
                        <text x="200" y="208" fontSize="47" fontWeight="300" fill="#111" textAnchor="middle" textLength="73" lengthAdjust="spacingAndGlyphs">2.50</text>
                      </ChartSvg>
                    </GaugeCard>
                    <SlicerCard>
                      <SlicerTitle>Tourist_Attraction</SlicerTitle>
                      <SlicerList>
                        {slicerItems.map(item => (
                          <SlicerItem key={item}><Radio />{item}</SlicerItem>
                        ))}
                      </SlicerList>
                      <SlicerScroll />
                    </SlicerCard>
                  </VisualRow>
                  <NavRow>
                    <NavPill $w={174}>Overview</NavPill>
                    <NavPill $w={173}>View Hotel Details</NavPill>
                    <NavPill $w={175} $dark>View Tourist Landmarks Details</NavPill>
                  </NavRow>
                </RightSide>
              </Lower>
            </Canvas>

            <FiltersPane>
              <PaneHeader $left={14} $right={12}>
                <svg width="22" height="20" viewBox="0 0 22 20" fill="none" stroke="#252423" strokeWidth="1.8">
                  <path d="M1 2H20L13 10V18H9V10Z" />
                </svg>
                <HeaderText $ml={10}>Filters</HeaderText>
                <EyeIcon width="18" height="14" viewBox="0 0 18 14" fill="none" stroke="#252423" strokeWidth="1.4">
                  <path d="M1 7C5 1 13 1 17 7" />
                  <circle cx="9" cy="8" r="3" />
                </EyeIcon>
                <DoubleChevron />
              </PaneHeader>
              <FilterSearch>
                <MirrorSearch size={22} strokeWidth={1.2} />
                Search
              </FilterSearch>
              <PaneRule />
              <FilterHead $top={22}>Filters on this page<Dots>...</Dots></FilterHead>
              <DropBox>Add data fields here</DropBox>
              <FilterHead $top={35}>Filters on all pages<Dots>...</Dots></FilterHead>
              <DropBox>Add data fields here</DropBox>
            </FiltersPane>
          </CanvasRow>

          <TabBar>
            <Devices>
              <DeviceBtn $w={30} $top={9} $on>
                <svg width="25" height="19" viewBox="0 0 25 19" fill="none" stroke="#605e5c" strokeWidth="1.4">
                  <rect x="1" y="1" width="23" height="13" />
                  <path d="M12.5 14V18M8 18H17" />
                </svg>
              </DeviceBtn>
              <DeviceBtn $w={15} $top={6} $ml={32}>
                <svg width="15" height="25" viewBox="0 0 15 25" fill="none" stroke="#605e5c" strokeWidth="1.4">
                  <rect x="1" y="1" width="13" height="23" rx="1.5" />
                  <path d="M7 21H8" />
                </svg>
              </DeviceBtn>
              <DeviceBtn $w={58} $top={14} $ml={15}>
                <svg width="36" height="14" viewBox="0 0 36 14" fill="#c8c6c4">
                  <path d="M5 2V12L1 7Z M31 2V12L35 7Z" />
                </svg>
              </DeviceBtn>
            </Devices>
            <Tab $w={112}>Overview</Tab>
            <Tab $w={173}>View Hotel Details</Tab>
            <Tab $w={262} $on>
              View Tourist Landmarks Details
              <TabClose>x</TabClose>
            </Tab>
            <AddTab><Plus size={18} strokeWidth={3.2} color="#fff" /></AddTab>
          </TabBar>
        </Center>

        <SidePane $w={226}>
          <PaneHeader $left={9} $right={10}>
            <HeaderText>Visualizations</HeaderText>
            <DoubleChevron />
          </PaneHeader>
          <BuildLabel>Build visual</BuildLabel>
          <TileRow>
            <Tile $on>
              <svg width="32" height="32" viewBox="0 0 32 32">
                <path d="M3 2H26" stroke="#555" strokeWidth="1" />
                <rect x="2" y="7" width="29" height="10" fill={TEAL} stroke="#333" strokeDasharray="2 1" />
                <rect x="2" y="20" width="29" height="10" fill={TEAL} stroke="#333" strokeDasharray="2 1" />
              </svg>
            </Tile>
            <Tile>
              <svg width="32" height="32" viewBox="0 0 32 32" fill="none" stroke="#444" strokeWidth="1.2">
                <path d="M3 30V2H14L21 9V14 M14 2V9H21 M3 30H7" />
                <path d="M31 14L19 25 M10 30c4 1 8 0 9-5l-3-2c-3 1-3 5-6 7z" />
              </svg>
            </Tile>
          </TileRow>
          <VizGrid $top={8}>
            {vizIcons.map((icon, i) => <VizCell key={i}>{icon}</VizCell>)}
          </VizGrid>
          <DotRule $top={2.5} />
          <VizGrid $top={3}>
            {extraViz.map((icon, i) => <VizCell key={i}>{icon}</VizCell>)}
          </VizGrid>
          <DotRule $top={5} $solid />
          <WellLabel $top={13}>Values</WellLabel>
          <WellBox $top={7} $h={34} $pad={13}>Add data fields here</WellBox>
          <WellLabel $top={15} $bold={500}>Drill through</WellLabel>
          <ToggleRow $top={13}>
            Cross-report
            <Toggle><Knob />Off</Toggle>
          </ToggleRow>
          <ToggleRow $top={14}>
            Keep all filters
            <Toggle $on>On<Knob $on /></Toggle>
          </ToggleRow>
          <WellBox $top={13} $h={31} $pad={10}>Add drill-through fields here</WellBox>
        </SidePane>

        <SidePane $w={225}>
          <PaneHeader $left={10} $right={9}>
            <HeaderText>Data</HeaderText>
            <DoubleChevron />
          </PaneHeader>
          <DataSearch>
            <Search size={20} strokeWidth={1.3} color="#484644" />
            Search
          </DataSearch>
          <Tree>
            {["customer (2)", "hotel info (2)", "hotel_customer"].map(name => (
              <TreeRow key={name}>
                <TreeChevron />
                <TableGlyph />
                {name}
              </TreeRow>
            ))}
          </Tree>
        </SidePane>
      </Main>

      <StatusBar>
        Page 3 of 3
        <ZoomControls>
          -
          <ZoomTrack><ZoomThumb /><ZoomTick /></ZoomTrack>
          +
          <ZoomText>73%</ZoomText>
          <FitButton>
            <svg width="12" height="10" fill="none" stroke="#8a8886"><path d="M0 3V0H3M9 0H12V3M0 7V10H3M9 10H12V7" /></svg>
          </FitButton>
        </ZoomControls>
      </StatusBar>

      <Watermark>
        <WatermarkAr dir="rtl" lang="ar">نفذلي</WatermarkAr>
        <WatermarkEn>nafezly.com</WatermarkEn>
      </Watermark>
    </Page>
  );
}
